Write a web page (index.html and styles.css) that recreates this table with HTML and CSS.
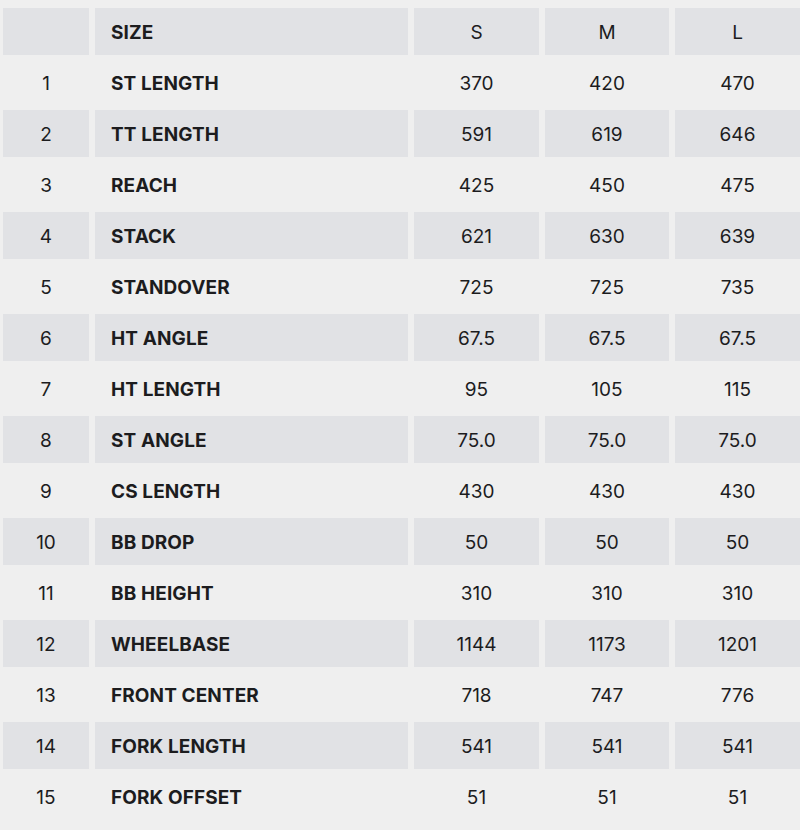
FILE: index.html
```html
<!DOCTYPE html>
<html>
<head>
<meta charset="utf-8">
<link rel="stylesheet" href="styles.css">
</head>
<body>
<div class="geo">
  <div class="c shade num"></div><div class="c shade lbl">SIZE</div><div class="c shade num">S</div><div class="c shade num">M</div><div class="c shade num">L</div>
  <div class="c num">1</div><div class="c lbl">ST LENGTH</div><div class="c num">370</div><div class="c num">420</div><div class="c num">470</div>
  <div class="c shade num">2</div><div class="c shade lbl">TT LENGTH</div><div class="c shade num">591</div><div class="c shade num">619</div><div class="c shade num">646</div>
  <div class="c num">3</div><div class="c lbl">REACH</div><div class="c num">425</div><div class="c num">450</div><div class="c num">475</div>
  <div class="c shade num">4</div><div class="c shade lbl">STACK</div><div class="c shade num">621</div><div class="c shade num">630</div><div class="c shade num">639</div>
  <div class="c num">5</div><div class="c lbl">STANDOVER</div><div class="c num">725</div><div class="c num">725</div><div class="c num">735</div>
  <div class="c shade num">6</div><div class="c shade lbl">HT ANGLE</div><div class="c shade num">67.5</div><div class="c shade num">67.5</div><div class="c shade num">67.5</div>
  <div class="c num">7</div><div class="c lbl">HT LENGTH</div><div class="c num">95</div><div class="c num">105</div><div class="c num">115</div>
  <div class="c shade num">8</div><div class="c shade lbl">ST ANGLE</div><div class="c shade num">75.0</div><div class="c shade num">75.0</div><div class="c shade num">75.0</div>
  <div class="c num">9</div><div class="c lbl">CS LENGTH</div><div class="c num">430</div><div class="c num">430</div><div class="c num">430</div>
  <div class="c shade num">10</div><div class="c shade lbl">BB DROP</div><div class="c shade num">50</div><div class="c shade num">50</div><div class="c shade num">50</div>
  <div class="c num">11</div><div class="c lbl">BB HEIGHT</div><div class="c num">310</div><div class="c num">310</div><div class="c num">310</div>
  <div class="c shade num">12</div><div class="c shade lbl">WHEELBASE</div><div class="c shade num">1144</div><div class="c shade num">1173</div><div class="c shade num">1201</div>
  <div class="c num">13</div><div class="c lbl">FRONT CENTER</div><div class="c num">718</div><div class="c num">747</div><div class="c num">776</div>
  <div class="c shade num">14</div><div class="c shade lbl">FORK LENGTH</div><div class="c shade num">541</div><div class="c shade num">541</div><div class="c shade num">541</div>
  <div class="c num">15</div><div class="c lbl">FORK OFFSET</div><div class="c num">51</div><div class="c num">51</div><div class="c num">51</div>
</div>
</body>
</html>
```
FILE: styles.css
```css
html, body {
  margin: 0;
  padding: 0;
  background: #efefef;
  overflow: hidden;
}
body {
  font-family: Inter, "Open Sans", sans-serif;
  color: #1c1c1e;
}
.geo {
  display: grid;
  grid-template-columns: 86px 313px 125px 124px 125px;
  grid-auto-rows: 47px;
  column-gap: 6px;
  row-gap: 4px;
  margin: 8px 0 0 3px;
}
.c {
  display: flex;
  align-items: center;
  padding-top: 2px;
  font-size: 19px;
  line-height: 1;
}
.shade {
  background: #e1e2e5;
}
.num {
  justify-content: center;
  font-weight: 400;
}
.lbl {
  padding-left: 16px;
  font-weight: 700;
  letter-spacing: 0.1px;
}
```
